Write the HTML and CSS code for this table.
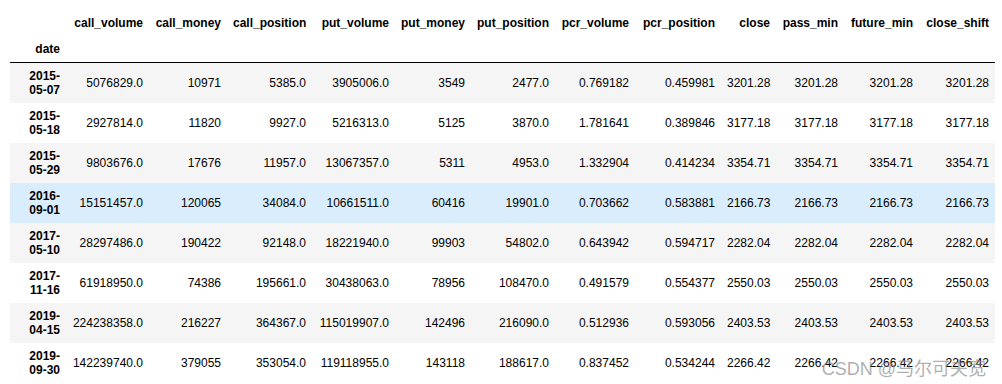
FILE: index.html
```html
<!DOCTYPE html>
<html lang="zh-CN">
<head>
    <meta charset="UTF-8">
    <title>DataFrame</title>
    <link rel="stylesheet" href="styles.css">
</head>
<body>
    <div class="output">
        <table class="dataframe">
            <colgroup>
                <col class="c-date">
                <col class="c-call-volume">
                <col class="c-call-money">
                <col class="c-call-position">
                <col class="c-put-volume">
                <col class="c-put-money">
                <col class="c-put-position">
                <col class="c-pcr-volume">
                <col class="c-pcr-position">
                <col class="c-close">
                <col class="c-pass-min">
                <col class="c-future-min">
                <col class="c-close-shift">
            </colgroup>
            <thead>
                <tr>
                    <th></th>
                    <th>call_volume</th>
                    <th>call_money</th>
                    <th>call_position</th>
                    <th>put_volume</th>
                    <th>put_money</th>
                    <th>put_position</th>
                    <th>pcr_volume</th>
                    <th>pcr_position</th>
                    <th>close</th>
                    <th>pass_min</th>
                    <th>future_min</th>
                    <th>close_shift</th>
                </tr>
                <tr class="index-name">
                    <th>date</th>
                    <th></th><th></th><th></th><th></th><th></th><th></th>
                    <th></th><th></th><th></th><th></th><th></th><th></th>
                </tr>
            </thead>
            <tbody>
                <tr>
                    <th>2015-05-07</th>
                    <td>5076829.0</td><td>10971</td><td>5385.0</td><td>3905006.0</td><td>3549</td><td>2477.0</td>
                    <td>0.769182</td><td>0.459981</td><td>3201.28</td><td>3201.28</td><td>3201.28</td><td>3201.28</td>
                </tr>
                <tr>
                    <th>2015-05-18</th>
                    <td>2927814.0</td><td>11820</td><td>9927.0</td><td>5216313.0</td><td>5125</td><td>3870.0</td>
                    <td>1.781641</td><td>0.389846</td><td>3177.18</td><td>3177.18</td><td>3177.18</td><td>3177.18</td>
                </tr>
                <tr>
                    <th>2015-05-29</th>
                    <td>9803676.0</td><td>17676</td><td>11957.0</td><td>13067357.0</td><td>5311</td><td>4953.0</td>
                    <td>1.332904</td><td>0.414234</td><td>3354.71</td><td>3354.71</td><td>3354.71</td><td>3354.71</td>
                </tr>
                <tr class="hover">
                    <th>2016-09-01</th>
                    <td>15151457.0</td><td>120065</td><td>34084.0</td><td>10661511.0</td><td>60416</td><td>19901.0</td>
                    <td>0.703662</td><td>0.583881</td><td>2166.73</td><td>2166.73</td><td>2166.73</td><td>2166.73</td>
                </tr>
                <tr>
                    <th>2017-05-10</th>
                    <td>28297486.0</td><td>190422</td><td>92148.0</td><td>18221940.0</td><td>99903</td><td>54802.0</td>
                    <td>0.643942</td><td>0.594717</td><td>2282.04</td><td>2282.04</td><td>2282.04</td><td>2282.04</td>
                </tr>
                <tr>
                    <th>2017-11-16</th>
                    <td>61918950.0</td><td>74386</td><td>195661.0</td><td>30438063.0</td><td>78956</td><td>108470.0</td>
                    <td>0.491579</td><td>0.554377</td><td>2550.03</td><td>2550.03</td><td>2550.03</td><td>2550.03</td>
                </tr>
                <tr>
                    <th>2019-04-15</th>
                    <td>224238358.0</td><td>216227</td><td>364367.0</td><td>115019907.0</td><td>142496</td><td>216090.0</td>
                    <td>0.512936</td><td>0.593056</td><td>2403.53</td><td>2403.53</td><td>2403.53</td><td>2403.53</td>
                </tr>
                <tr>
                    <th>2019-09-30</th>
                    <td>142239740.0</td><td>379055</td><td>353054.0</td><td>119118955.0</td><td>143118</td><td>188617.0</td>
                    <td>0.837452</td><td>0.534244</td><td>2266.42</td><td>2266.42</td><td>2266.42</td><td>2266.42</td>
                </tr>
            </tbody>
        </table>
        <div class="watermark">CSDN @马尔可夫宽</div>
    </div>
</body>
</html>
```

FILE: styles.css
```css
* {
    box-sizing: border-box;
}

body {
    margin: 0;
    padding: 10px;
    background: #fff;
    color: #000;
    font-family: "Liberation Sans", Arial, sans-serif;
    overflow: hidden;
}

.output {
    position: relative;
}

.dataframe {
    border-collapse: collapse;
    border-spacing: 0;
    table-layout: fixed;
    width: 985px;
    font-size: 12px;
}

.c-date { width: 56px; }
.c-call-volume { width: 83px; }
.c-call-money { width: 78px; }
.c-call-position { width: 85px; }
.c-put-volume { width: 83px; }
.c-put-money { width: 76px; }
.c-put-position { width: 84px; }
.c-pcr-volume { width: 80px; }
.c-pcr-position { width: 86px; }
.c-close { width: 55px; }
.c-pass-min { width: 68px; }
.c-future-min { width: 75px; }
.c-close-shift { width: 76px; }

.dataframe th,
.dataframe td {
    text-align: right;
    vertical-align: middle;
    padding: 6px;
    line-height: normal;
    white-space: normal;
    border: none;
}

.dataframe th {
    font-weight: bold;
}

.dataframe thead {
    border-bottom: 1px solid #000;
}

.dataframe tbody tr:nth-child(odd) {
    background: #f5f5f5;
}

.dataframe tbody tr.hover {
    background: rgba(66, 165, 245, 0.2);
}

.watermark {
    position: absolute;
    right: 6px;
    bottom: 3px;
    font-family: "Liberation Sans", "Noto Sans CJK SC", sans-serif;
    font-size: 18px;
    color: rgba(140, 140, 140, 0.7);
    pointer-events: none;
}
```
